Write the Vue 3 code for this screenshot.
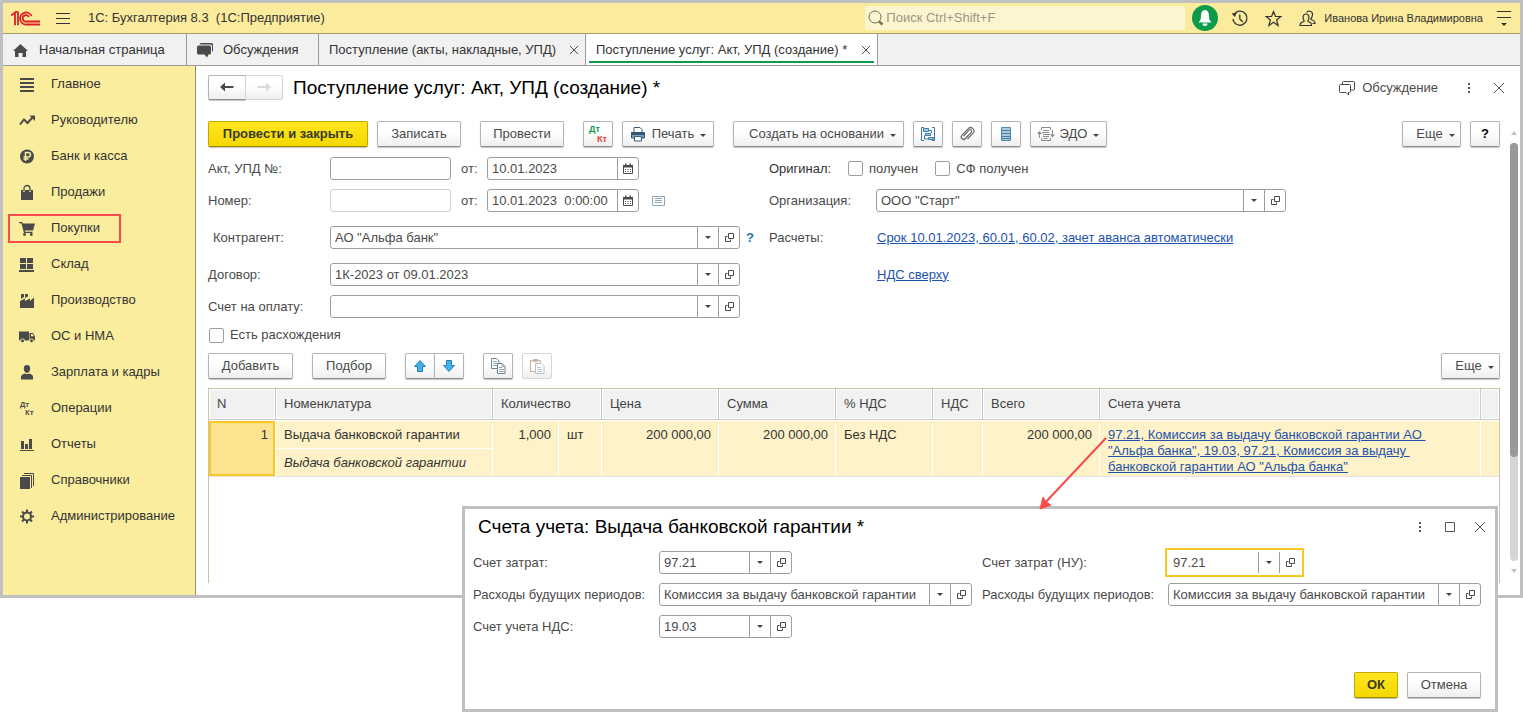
<script setup>
import { ref } from 'vue'

const icons = {
  lines: '<path d="M1 2h14v2H1zM1 6h14v2H1zM1 10h14v2H1zM1 14h14v2H1z"/>',
  trend: '<path d="M1 12.500 5 7.500l3.500 3.500 5-5.500" fill="none" stroke="currentColor" stroke-width="2"/><path d="M10.500 3.500H16V9z"/>',
  ruble: '<circle cx="8" cy="8.500" r="7"/><path d="M6.500 13V4.500h2.700a2.200 2.200 0 0 1 0 4.500H4.500M4.500 11h5" fill="none" stroke="#fbed9e" stroke-width="1.500"/>',
  bag: '<path d="M2 6h2v2h2V6h4v2h2V6h2v10H2z"/><path d="M5 7.500V4.500a3 3 0 0 1 6 0v3" fill="none" stroke="currentColor" stroke-width="1.300"/>',
  cart: '<path d="M0 2h3.300l.6 1.500H16l-2 7H5.800l.3 1.200H13.500V13H5L2.400 3.300H0z"/><circle cx="5.500" cy="14.500" r="1.400"/><circle cx="12.300" cy="14.500" r="1.400"/>',
  boxes: '<path d="M1 2h6v5H1zM8 2h6v5H8zM1 8h6v5H1zM8 8h6v5H8zM0 14h15v2H0z"/>',
  factory: '<path d="M1 16V9l5-2.500V9l5-2.500V9l4-3.500V16zM2 2h3v3L2 7zM6 2h3v2.500L6 6z"/>',
  truck: '<path d="M0 3.500h10v9H0z"/><path d="M10.500 5H14l2 3.500v4h-5.500z"/><path d="M12 6h1.700l1.200 2.300H12z" fill="#fbed9e"/><circle cx="3.500" cy="12.800" r="2.300" fill="#fbed9e"/><circle cx="12.500" cy="12.800" r="2.300" fill="#fbed9e"/><circle cx="3.500" cy="12.800" r="1.500"/><circle cx="12.500" cy="12.800" r="1.500"/>',
  person: '<path d="M8 1a3.200 3.600 0 0 1 3.200 3.800C11.200 7 9.800 9 8 9S4.800 7 4.800 4.800A3.200 3.600 0 0 1 8 1zM2 15.500v-3c0-1.500 2-2.500 4-3 1 .8 3 .8 4 0 2 .5 4 1.500 4 3v3z"/>',
  dtkt: '<text x="1" y="7" font-family="Open Sans" font-weight="700" font-size="7">Дт</text><text x="6" y="15" font-family="Open Sans" font-weight="700" font-size="7">Кт</text>',
  chart: '<path d="M2 5h3v8H2zM6 8h3v5H6zM10 3h3v10h-3zM1 14h14v1H1z"/>',
  books: '<path d="M1 5h10v12H1z"/><path d="M3 3.500h9.500V16M5 1.500h9.500V14" fill="none" stroke="currentColor"/>',
  gear: '<circle cx="8" cy="8.500" r="4" fill="none" stroke="currentColor" stroke-width="2"/><path d="M8 1.500v3M8 12.500v3M1 8.500h3M12 8.500h3M3 3.500l2.200 2.200M10.800 11.300 13 13.500M3 13.500l2.200-2.200M10.800 5.700 13 3.500" fill="none" stroke="currentColor" stroke-width="2"/>',
  home: '<path d="M7.500 2 15 9h-2v6H9.500v-4h-4v4H2V9H0z"/>',
  chats: '<path d="M4 1h10.500a1.500 1.500 0 0 1 1.500 1.500V8.500a1.500 1.500 0 0 1-1 1.400V4A1.500 1.500 0 0 0 13.500 2.500H2.700A1.500 1.500 0 0 1 4 1z"/><path d="M1.500 3.500h11A1.500 1.500 0 0 1 14 5v6a1.500 1.500 0 0 1-1.500 1.500h-1L10 15.500l-2.500-3h-6A1.500 1.500 0 0 1 0 11V5a1.500 1.500 0 0 1 1.500-1.500z"/>',
  chatsLine: '<path d="M1.500 4.500h9a1 1 0 0 1 1 1v6a1 1 0 0 1-1 1h-1V15L7 12.500H1.500a1 1 0 0 1-1-1v-6a1 1 0 0 1 1-1zM3.500 4V2.500a1 1 0 0 1 1-1h10a1 1 0 0 1 1 1v6.500a1 1 0 0 1-1 1H12" fill="none" stroke="currentColor"/>',
  open: '<path d="M7.500 3.500h5v5h-5zM6.500 6.500h-2v5h5v-2" fill="none" stroke="currentColor"/>',
  calendar: '<path d="M3.500 5.500h9v7h-9z" fill="none" stroke="currentColor"/><path d="M3 4h10v2.500H3zM5 2.500h1.500v2H5zM9.500 2.500H11v2H9.500z"/><path d="M5 8h1v1H5zM7.500 8h1v1h-1zM10 8h1v1h-1zM5 10h1v1H5zM7.500 10h1v1h-1zM10 10h1v1h-1z"/>',
  print: '<path d="M4 1.500h6l2 2V7H4z" fill="#fff" stroke="#3a5f7d"/><path d="M1.500 6.500h13v5.500h-13z" fill="#7ba3bf" stroke="#33546e"/><path d="M1.500 6.500h13V9h-13z" fill="#33546e"/><path d="M4.500 10.500h7v4.500h-7z" fill="#fff" stroke="#3a5f7d"/>',
  tree: '<path d="M4 1.500H1.500v13H4M12 1.500h2.500v13H12" fill="none" stroke="#3c7ca8"/><path d="M3.500 2.500h5v3h-5zM5.500 7.500h5v2h-5zM8.500 11.500h5v2h-5z" fill="#a9cbe0" stroke="#3c7ca8"/><path d="M9 4.500h2.500V7M5 9.500H4.500v3.500H8" fill="none" stroke="#3c7ca8"/>',
  clip: '<path d="M4.500 10 10 4.200a1.500 1.500 0 0 1 2.200 2.100L6.500 12.500a2.400 2.400 0 0 1-3.700-3.200L9.300 2.700a3.200 3.200 0 0 1 4.700 4.500L8.500 13" fill="none" stroke="#6a6a6a" stroke-width="1.200"/>',
  list: '<path d="M3.500 1.500h9v13h-9z" fill="#a9cbe0" stroke="#5487a8"/><path d="M3 4.500h10M3 7.500h10M3 10.500h10M3 12.500h10" stroke="#4a7c9e"/>',
  edo: '<path d="M3.500 4V1.500h9V4M3.500 12v2.500h9V12M5 4.500h6M4 6.500h7M5 8.500h7M5 10.500h6M5.500 12.500h4" fill="none" stroke="#8a8a8a"/><path d="M1.500 12V7M14.500 4v5" fill="none" stroke="#8a8a8a"/><path d="M-1 8 1.500 5 4 8zM12 8.500h5L14.500 11.500z" fill="#8a8a8a"/>',
  up: '<path d="M8 2.500 13.500 8.500H10.500V13.500h-5V8.500h-3z" fill="#41b1ec" stroke="#2a7fb5"/>',
  down: '<path d="M8 13.500 13.500 7.500H10.500V2.500h-5v5h-3z" fill="#41b1ec" stroke="#2a7fb5"/>',
  copy: '<path d="M1.500 .5h5l2.500 2.500v7.500H1.500z" fill="#fff" stroke="#72808e"/><path d="M3 3.500h4M3 5.500h4M3 7.500h4" stroke="#8fa5b8"/><path d="M7.500 5.500h4.500l3 3v7H7.500z" fill="#fff" stroke="#72808e"/><path d="M12 5.500v3h3M9 9.500h3M9 11.500h5M9 13.500h5" fill="none" stroke="#8fa5b8"/>',
  paste: '<path d="M1.500 2.500h10v11h-10z" fill="#fff" stroke="#dba884"/><path d="M4 1h5v3H4z" fill="#b9b9b9"/><path d="M6.500 5.500H12l3 3v7H6.500z" fill="#fff" stroke="#b7c0c8"/><path d="M8 9.500h4M8 11.500h5M8 13.500h5" stroke="#bcc9d4"/>',
  history: '<path d="M3.200 4.200A7 7 0 1 1 2 9" fill="none" stroke="currentColor" stroke-width="1.300"/><path d="M8.800 4.500V9l3 3" fill="none" stroke="currentColor" stroke-width="1.300"/><path d="M.5 3.500 5.500 3 4 7z"/>',
  star: '<path d="M8.500 1.500l2 5h5.300l-4.200 3.500 1.500 5.500-4.600-3.200-4.600 3.200 1.500-5.500L1.200 6.500h5.300z" fill="none" stroke="currentColor" stroke-width="1.200"/>',
  users: '<path d="M1 15.500c0-2.500 1-3 4-4V10.500C3.500 8.500 3.500 4 7 4s3.500 4.500 2 6.500v1c3 1 3.500 1.500 3.500 4zM7.500 2.500C9 .5 13.500.5 13.500 4.500c0 2-.8 3-1.500 4v1c3 .8 4 1.500 4 4h-2.500" fill="none" stroke="currentColor" stroke-width="1.200"/>',
  cross: '<path d="M4 4l8 8M12 4l-8 8" fill="none" stroke="currentColor"/>',
  crossBig: '<path d="M3 3l10 10M13 3 3 13" fill="none" stroke="currentColor"/>',
  square: '<path d="M3.500 3.500h9v9h-9z" fill="none" stroke="currentColor"/>',
  dots: '<path d="M7 3h2v2H7zM7 7h2v2H7zM7 11h2v2H7z"/>',
  card: '<path d="M.5 3.500h12v9H.5z" fill="none" stroke="#8fa5b8"/><path d="M3 5.500h7M3 7.500h7M3 9.500h7" stroke="#8fa5b8"/>',
  back: '<path d="M1 8l5-4.500V7h8.500v2H6v3.500z"/>',
  forward: '<path d="M15 8l-5-4.500V7H1.500v2H10v3.500z"/>'
}

const sections = [
  ['lines', 'Главное'],
  ['trend', 'Руководителю'],
  ['ruble', 'Банк и касса'],
  ['bag', 'Продажи'],
  ['cart', 'Покупки'],
  ['boxes', 'Склад'],
  ['factory', 'Производство'],
  ['truck', 'ОС и НМА'],
  ['person', 'Зарплата и кадры'],
  ['dtkt', 'Операции'],
  ['chart', 'Отчеты'],
  ['books', 'Справочники'],
  ['gear', 'Администрирование']
]

const form = ref({
  act: '',
  actDate: '10.01.2023',
  number: '',
  date: '10.01.2023  0:00:00',
  organization: 'ООО "Старт"',
  contractor: 'АО "Альфа банк"',
  contract: '1К-2023 от 09.01.2023',
  invoice: '',
  original: false,
  invoiceReceived: false,
  mismatch: false
})

const accounts = ref([
  { id: 'cost', label: 'Счет затрат:', value: '97.21', size: 'short' },
  { id: 'cost-tax', label: 'Счет затрат (НУ):', value: '97.21', size: 'short', active: true },
  { id: 'future', label: 'Расходы будущих периодов:', value: 'Комиссия за выдачу банковской гарантии' },
  { id: 'future-tax', label: 'Расходы будущих периодов:', value: 'Комиссия за выдачу банковской гарантии' },
  { id: 'vat', label: 'Счет учета НДС:', value: '19.03', size: 'short' }
])
</script>

<template>
  <div class="desktop">
    <div class="window">
      <header class="topbar">
        <svg class="logo" viewBox="0 0 30 15" aria-label="1С">
          <g fill="none" stroke="#dd1f26" stroke-width="1.800">
            <path d="M0 4.500 4 1.500v12.700M7 .500v13.700M4 1.500 7 .5" />
            <path d="M20.500 5A6 6 0 1 0 15.500 13.500H29M17.800 6A3.200 3.200 0 1 0 15.500 10.500H29" />
          </g>
        </svg>
        <button class="plain menu" aria-label="Меню"><i></i><i></i><i></i></button>
        <span class="app-name">1С: Бухгалтерия 8.3&nbsp; (1С:Предприятие)</span>
        <label class="search">
          <svg viewBox="0 0 16 16"><circle cx="7" cy="7" r="6" fill="none" stroke="#777058" /><path d="M11 11.500l3.500 3" stroke="#777058" stroke-width="2.500" /></svg>
          <input type="text" placeholder="Поиск Ctrl+Shift+F" aria-label="Поиск">
        </label>
        <button class="plain bell" aria-label="Уведомления">
          <svg viewBox="0 0 26 26"><path d="M13 5c3.500.5 4 3.500 4 6.500 0 3 1 4.500 2.500 6h-13C8 16 9 14.500 9 11.500c0-3 .5-6 4-6.500z" fill="#fff" /><path d="M10.500 18.500h5a2.500 2.500 0 0 1-5 0z" fill="#fff" /></svg>
        </button>
        <button class="plain tool" aria-label="История"><svg class="ic" viewBox="0 0 17 17" v-html="icons.history"></svg></button>
        <button class="plain tool" aria-label="Избранное"><svg class="ic" viewBox="0 0 17 17" v-html="icons.star"></svg></button>
        <button class="plain tool" aria-label="Пользователи"><svg class="ic" viewBox="0 0 17 17" v-html="icons.users"></svg></button>
        <span class="user">Иванова Ирина Владимировна</span>
        <button class="plain service" aria-label="Сервис"><i></i><i></i><b></b></button>
      </header>

      <nav class="tabs">
        <a href="#" class="tab tab-home"><svg class="ic" viewBox="0 0 16 16" v-html="icons.home"></svg>Начальная страница</a>
        <a href="#" class="tab tab-chat"><svg class="ic" viewBox="0 0 16 16" v-html="icons.chats"></svg>Обсуждения</a>
        <div class="tab tab-doc"><a href="#">Поступление (акты, накладные, УПД)</a><button class="plain close" aria-label="Закрыть"><svg class="ic" viewBox="2 2 12 12" v-html="icons.cross"></svg></button></div>
        <div class="tab tab-current"><a href="#">Поступление услуг: Акт, УПД (создание) *</a><button class="plain close" aria-label="Закрыть"><svg class="ic" viewBox="2 2 12 12" v-html="icons.cross"></svg></button></div>
      </nav>

      <div class="body">
        <nav class="sections">
          <a v-for="[icon, title] in sections" :key="icon" href="#" :class="{ marked: icon === 'cart' }">
            <svg class="ic" viewBox="0 0 16 17" v-html="icons[icon]"></svg>{{ title }}
          </a>
        </nav>

        <main class="page">
          <div class="content">
            <div class="heading">
              <div class="pair nav-pair">
                <button class="btn" aria-label="Назад"><svg class="ic" viewBox="0 0 16 16" v-html="icons.back"></svg></button>
                <button class="btn" aria-label="Вперед" disabled><svg class="ic" viewBox="0 0 16 16" v-html="icons.forward"></svg></button>
              </div>
              <h1>Поступление услуг: Акт, УПД (создание) *</h1>
              <a href="#" class="discuss"><svg class="ic" viewBox="0 0 16 16" v-html="icons.chatsLine"></svg>Обсуждение</a>
              <button class="plain head-btn" aria-label="Действия"><svg class="ic" viewBox="0 0 16 16" v-html="icons.dots"></svg></button>
              <button class="plain head-btn" aria-label="Закрыть"><svg class="ic" viewBox="0 0 16 16" v-html="icons.crossBig"></svg></button>
            </div>

            <div class="bar">
              <button class="btn primary w-post">Провести и закрыть</button>
              <button class="btn w-mid">Записать</button>
              <button class="btn w-mid apart">Провести</button>
              <button class="btn w-icon apart dtkt" aria-label="Дт Кт"><span>Дт</span><span>Кт</span></button>
              <button class="btn w-print"><svg class="ic" viewBox="0 0 16 16" v-html="icons.print"></svg>Печать<i class="caret"></i></button>
              <button class="btn w-create apart">Создать на основании<i class="caret"></i></button>
              <button class="btn w-icon" aria-label="Структура подчиненности"><svg class="ic" viewBox="0 0 16 16" v-html="icons.tree"></svg></button>
              <button class="btn w-icon" aria-label="Файлы"><svg class="ic" viewBox="0 0 16 16" v-html="icons.clip"></svg></button>
              <button class="btn w-icon" aria-label="Реестр"><svg class="ic" viewBox="0 0 16 16" v-html="icons.list"></svg></button>
              <button class="btn w-edo"><svg class="ic" viewBox="0 0 16 16" v-html="icons.edo"></svg>ЭДО<i class="caret"></i></button>
              <button class="btn w-more push">Еще<i class="caret"></i></button>
              <button class="btn w-icon help">?</button>
            </div>

            <div class="row">
              <label for="act">Акт, УПД №:</label>
              <div class="cell">
                <div class="field number"><input id="act" v-model="form.act" type="text"></div>
                <label for="act-date" class="from">от:</label>
                <div class="field date"><input id="act-date" v-model="form.actDate" type="text"><button class="plain" aria-label="Календарь"><svg class="ic" viewBox="0 0 16 16" v-html="icons.calendar"></svg></button></div>
              </div>
              <span class="strong">Оригинал:</span>
              <div class="cell checks">
                <label class="check"><input v-model="form.original" type="checkbox">получен</label>
                <label class="check"><input v-model="form.invoiceReceived" type="checkbox">СФ получен</label>
              </div>
            </div>
            <div class="row">
              <label for="number">Номер:</label>
              <div class="cell">
                <div class="field number pale"><input id="number" v-model="form.number" type="text"></div>
                <label for="date" class="from">от:</label>
                <div class="field date"><input id="date" v-model="form.date" type="text"><button class="plain" aria-label="Календарь"><svg class="ic" viewBox="0 0 16 16" v-html="icons.calendar"></svg></button></div>
                <svg class="ic card" viewBox="0 0 16 16" v-html="icons.card"></svg>
              </div>
              <label for="org">Организация:</label>
              <div class="field combo"><input id="org" v-model="form.organization" type="text"><button class="plain" aria-label="Выбрать"><i class="caret"></i></button><button class="plain" aria-label="Открыть"><svg class="ic" viewBox="0 0 16 16" v-html="icons.open"></svg></button></div>
            </div>
            <div class="row wide-gap">
              <label for="contractor" class="indent">Контрагент:</label>
              <div class="cell">
                <div class="field combo"><input id="contractor" v-model="form.contractor" type="text"><button class="plain" aria-label="Выбрать"><i class="caret"></i></button><button class="plain" aria-label="Открыть"><svg class="ic" viewBox="0 0 16 16" v-html="icons.open"></svg></button></div>
                <a href="#" class="hint">?</a>
              </div>
              <span>Расчеты:</span>
              <a href="#" class="link">Срок 10.01.2023, 60.01, 60.02, зачет аванса автоматически</a>
            </div>
            <div class="row wide-gap">
              <label for="contract">Договор:</label>
              <div class="field combo"><input id="contract" v-model="form.contract" type="text"><button class="plain" aria-label="Выбрать"><i class="caret"></i></button><button class="plain" aria-label="Открыть"><svg class="ic" viewBox="0 0 16 16" v-html="icons.open"></svg></button></div>
              <span></span>
              <a href="#" class="link">НДС сверху</a>
            </div>
            <div class="row">
              <label for="invoice">Счет на оплату:</label>
              <div class="field combo"><input id="invoice" v-model="form.invoice" type="text"><button class="plain" aria-label="Выбрать"><i class="caret"></i></button><button class="plain" aria-label="Открыть"><svg class="ic" viewBox="0 0 16 16" v-html="icons.open"></svg></button></div>
            </div>
            <label class="check mismatch"><input v-model="form.mismatch" type="checkbox">Есть расхождения</label>

            <div class="bar list-bar">
              <button class="btn w-add">Добавить</button>
              <button class="btn w-pick apart">Подбор</button>
              <div class="pair apart">
                <button class="btn" aria-label="Вверх"><svg class="ic" viewBox="0 0 16 16" v-html="icons.up"></svg></button>
                <button class="btn" aria-label="Вниз"><svg class="ic" viewBox="0 0 16 16" v-html="icons.down"></svg></button>
              </div>
              <button class="btn w-icon apart" aria-label="Копировать"><svg class="ic" viewBox="0 0 16 16" v-html="icons.copy"></svg></button>
              <button class="btn w-icon" aria-label="Вставить" disabled><svg class="ic" viewBox="0 0 16 16" v-html="icons.paste"></svg></button>
              <button class="btn w-more push">Еще<i class="caret"></i></button>
            </div>

            <div class="grid">
              <table>
                <colgroup>
                  <col class="c-n"><col class="c-item"><col class="c-qty"><col class="c-unit"><col class="c-sum"><col class="c-sum">
                  <col class="c-rate"><col class="c-vat"><col class="c-sum"><col><col class="c-end">
                </colgroup>
                <thead>
                  <tr>
                    <th>N</th><th>Номенклатура</th><th colspan="2">Количество</th><th>Цена</th><th>Сумма</th>
                    <th>% НДС</th><th>НДС</th><th>Всего</th><th>Счета учета</th><th></th>
                  </tr>
                </thead>
                <tbody>
                  <tr>
                    <td rowspan="2" class="num current">1</td>
                    <td>Выдача банковской гарантии</td>
                    <td rowspan="2" class="num">1,000</td>
                    <td rowspan="2">шт</td>
                    <td rowspan="2" class="num">200 000,00</td>
                    <td rowspan="2" class="num">200 000,00</td>
                    <td rowspan="2">Без НДС</td>
                    <td rowspan="2"></td>
                    <td rowspan="2" class="num">200 000,00</td>
                    <td rowspan="2"><a href="#" class="link">97.21, Комиссия за выдачу банковской гарантии АО&nbsp;<br>"Альфа банка", 19.03, 97.21, Комиссия за выдачу&nbsp;<br>банковской гарантии АО "Альфа банка"</a></td>
                    <td rowspan="2"></td>
                  </tr>
                  <tr><td class="note">Выдача банковской гарантии</td></tr>
                </tbody>
              </table>
            </div>
          </div>

          <div class="scroll">
            <i class="arrow-up"></i>
            <div class="track"><div class="thumb"></div></div>
            <i class="arrow-down"></i>
          </div>
        </main>
      </div>
    </div>

    <section class="dialog" role="dialog" aria-labelledby="dialog-title">
      <div class="dialog-head">
        <h2 id="dialog-title">Счета учета: Выдача банковской гарантии *</h2>
        <button class="plain head-btn" aria-label="Действия"><svg class="ic" viewBox="0 0 16 16" v-html="icons.dots"></svg></button>
        <button class="plain head-btn" aria-label="Развернуть"><svg class="ic" viewBox="0 0 16 16" v-html="icons.square"></svg></button>
        <button class="plain head-btn" aria-label="Закрыть"><svg class="ic" viewBox="0 0 16 16" v-html="icons.crossBig"></svg></button>
      </div>
      <div class="accounts">
        <div v-for="a in accounts" :key="a.id" class="account">
          <label :for="a.id">{{ a.label }}</label>
          <div class="field" :class="[a.size, { active: a.active }]"><input :id="a.id" v-model="a.value" type="text"><button class="plain" aria-label="Выбрать"><i class="caret"></i></button><button class="plain" aria-label="Открыть"><svg class="ic" viewBox="0 0 16 16" v-html="icons.open"></svg></button></div>
        </div>
      </div>
      <div class="dialog-foot">
        <button class="btn primary w-ok">ОК</button>
        <button class="btn w-pick">Отмена</button>
      </div>
    </section>

    <svg class="pointer" viewBox="0 0 70 76" aria-hidden="true">
      <path d="M68 3 5 70" stroke="#fb4a48" stroke-width="2" fill="none" />
      <path d="M2 74 5 62l3 5 5 3z" fill="#fb4a48" stroke="#fb4a48" />
    </svg>
  </div>
</template>

<style>
body {
  background: #fff;
}
</style>

<style scoped>
.desktop,
.desktop *,
.desktop *::after {
  box-sizing: border-box;
}
.desktop {
  position: relative;
  min-height: 100vh;
  font: 13px/16px "Liberation Sans", Arial, sans-serif;
  color: #4a4a4a;
}
input,
button {
  font: inherit;
  color: inherit;
}
a {
  color: inherit;
  text-decoration: none;
}
.plain {
  display: flex;
  align-items: center;
  justify-content: center;
  padding: 0;
  border: 0;
  background: none;
}
.ic {
  display: block;
  flex: none;
  width: 16px;
  height: 16px;
  fill: currentColor;
  overflow: visible;
}
.caret {
  border: 3px solid transparent;
  border-top-color: #444;
  border-bottom: 0;
}
.btn .caret {
  margin-top: 4px;
}

.window {
  border: 3px solid #c0c0c0;
  background: #fff;
}
.topbar {
  display: flex;
  align-items: center;
  height: 31px;
  padding: 0 9px 0 8px;
  background: #fbeb9c;
  border-bottom: 1px solid #a39c72;
  color: #333;
}
.logo {
  width: 30px;
  height: 15px;
}
.menu {
  flex-direction: column;
  gap: 4px;
  width: 14px;
  margin-left: 15px;
}
.menu i,
.service i {
  width: 14px;
  height: 1px;
  background: #333;
}
.app-name {
  margin: 0 auto 0 18px;
  white-space: pre;
}
.search {
  display: flex;
  align-items: center;
  width: 320px;
  height: 24px;
  padding-left: 3px;
  border-radius: 2px;
  background: #fdf5cf;
}
.search svg {
  width: 16px;
  height: 16px;
}
.search input {
  flex: 1;
  min-width: 0;
  padding: 0 2px;
  border: 0;
  background: none;
}
.search input::placeholder {
  color: #9a9687;
  opacity: 1;
}
.bell {
  width: 26px;
  height: 26px;
  margin: 0 13px 0 7px;
  border-radius: 50%;
  background: #0b9b4b;
}
.bell svg {
  width: 26px;
  height: 26px;
}
.tool {
  margin-right: 17px;
}
.tool .ic {
  width: 17px;
  height: 17px;
}
.tool + .user {
  margin-left: -9px;
}
.user {
  font-size: 11px;
  margin-right: 14px;
}
.service {
  flex-direction: column;
  gap: 5px;
  width: 14px;
}
.service b {
  border: 3px solid transparent;
  border-top-color: #333;
  border-bottom: 0;
}

.tabs {
  display: flex;
  height: 32px;
  background: #f1f1f1;
  border-bottom: 1px solid #9b9b9b;
  color: #333;
}
.tab {
  display: flex;
  align-items: center;
  border-right: 1px solid #9b9b9b;
  white-space: nowrap;
}
.tab-home {
  width: 184px;
  padding-left: 10px;
  gap: 10px;
}
.tab-chat {
  width: 132px;
  padding-left: 10px;
  gap: 10px;
}
.tab .ic,
.sections .ic {
  color: #4a4a4a;
}
.tab-doc,
.tab-current {
  justify-content: space-between;
  padding: 0 5px 0 10px;
}
.tab-doc {
  width: 267px;
}
.tab-current {
  position: relative;
  width: 292px;
  background: #fff;
}
.tab-current::after {
  content: "";
  position: absolute;
  left: 3px;
  right: 3px;
  bottom: 2px;
  height: 2px;
  background: #0b9b4b;
}
.close .ic {
  width: 12px;
  height: 12px;
}

.body {
  display: flex;
}
.sections {
  flex: none;
  width: 193px;
  padding-bottom: 61px;
  background: #fbed9e;
  border-right: 1px solid #948d5c;
  color: #333;
}
.sections a {
  position: relative;
  display: flex;
  align-items: center;
  gap: 16px;
  height: 36px;
  padding-left: 16px;
}
.sections .ic {
  height: 17px;
}
.marked::after {
  content: "";
  position: absolute;
  top: 4px;
  left: 5px;
  width: 113px;
  height: 29px;
  border: 2px solid #fb4a48;
}

.page {
  display: flex;
  flex: 1;
  min-width: 0;
}
.content {
  display: flex;
  flex-direction: column;
  flex: 1;
  min-width: 0;
  padding: 9px 9px 12px 12px;
}
.heading {
  display: flex;
  align-items: center;
  height: 25px;
  margin-bottom: 21px;
}
h1,
h2 {
  margin: 0;
  font-size: 19px;
  line-height: 24px;
  font-weight: 400;
  color: #000;
}
h1 {
  margin: 0 auto 0 10px;
}
.discuss {
  display: flex;
  gap: 7px;
  margin-right: 16px;
}
.head-btn {
  width: 30px;
  height: 24px;
  color: #555;
}
.heading .head-btn:last-child {
  margin-right: -14px;
}

.bar {
  display: flex;
  gap: 9px;
  margin-bottom: 10px;
}
.btn {
  display: flex;
  align-items: center;
  justify-content: center;
  gap: 6px;
  height: 26px;
  padding: 0 0 1px;
  border: 1px solid #b3b3b3;
  border-bottom-color: #8f8f8f;
  border-radius: 2px;
  background: linear-gradient(#fff 40%, #efefef);
  box-shadow: 0 1px 1px #c4c4c4;
  white-space: nowrap;
}
.btn:disabled {
  border-color: #d6d6d6;
  box-shadow: none;
  color: #d9d9d9;
}
.primary {
  border-color: #c2a900;
  border-bottom-color: #9c8800;
  background: linear-gradient(#ffe61f, #f5d800);
  color: #3a3a28;
  font-weight: 700;
}
.pair {
  display: flex;
}
.pair .btn {
  width: 30px;
  border-radius: 2px 0 0 2px;
}
.pair .btn + .btn {
  margin-left: -1px;
  border-radius: 0 2px 2px 0;
}
.nav-pair .btn {
  width: 38px;
  height: 25px;
}
.apart {
  margin-left: 10px;
}
.push {
  margin-left: auto;
}
.w-post {
  width: 160px;
}
.w-mid {
  width: 84px;
}
.w-add {
  width: 85px;
}
.w-pick {
  width: 74px;
}
.w-ok {
  width: 44px;
}
.w-icon {
  width: 30px;
}
.w-print {
  width: 92px;
}
.w-create {
  width: 171px;
}
.w-edo {
  width: 77px;
}
.w-more {
  width: 59px;
}
.w-more,
.w-create {
  padding-left: 8px;
}
.help {
  color: #000;
  font-weight: 700;
}
.dtkt {
  flex-direction: column;
  gap: 0;
  padding: 0 5px;
  font-size: 9px;
  line-height: 10px;
  font-weight: 700;
  color: #0b9b4b;
}
.dtkt span {
  align-self: flex-start;
}
.dtkt span + span {
  align-self: flex-end;
  color: #e2443f;
}

.row {
  display: grid;
  grid-template-columns: 122px 439px 107px 1fr;
  align-items: center;
  height: 23px;
  margin-bottom: 9px;
}
.wide-gap {
  margin-top: 5px;
}
.indent {
  padding-left: 5px;
}
.strong {
  color: #333;
}
.cell {
  display: flex;
  align-items: center;
}
.field {
  display: flex;
  height: 23px;
  border: 1px solid #9e9e9e;
  border-radius: 3px;
  background: #fff;
}
.field input {
  flex: 1;
  min-width: 0;
  padding: 0 4px;
  border: 0;
  background: none;
  outline: 0;
}
.field .plain {
  flex: none;
  width: 21px;
  border-left: 1px solid #9e9e9e;
}
.number {
  width: 121px;
}
.pale {
  border-color: #cfcfcf;
}
.from {
  width: 36px;
  padding-left: 10px;
}
.date {
  width: 152px;
}
.combo {
  width: 410px;
}
.card {
  margin-left: 13px;
}
.hint {
  margin-left: 6px;
  color: #1976b8;
  font-weight: 700;
}
.link {
  color: #1d52ad;
  text-decoration: underline;
}
.row .link {
  padding-left: 1px;
}
.check {
  display: flex;
  align-items: center;
  gap: 6px;
}
.check input {
  appearance: none;
  width: 15px;
  height: 15px;
  margin: 0;
  border: 1px solid #9e9e9e;
  border-radius: 2px;
  background: #fff;
}
.checks {
  gap: 17px;
  margin-left: -28px;
}
.mismatch {
  height: 16px;
  padding-left: 1px;
  margin-bottom: 10px;
}
.list-bar {
  margin-bottom: 9px;
}

.grid {
  flex: 1;
  border: 1px solid #c9c4a6;
  border-bottom: 0;
}
table {
  width: 100%;
  table-layout: fixed;
  border-collapse: separate;
  border-spacing: 0;
  border-bottom: 1px solid #e4e4e4;
  color: #333;
}
.c-n { width: 67px; }
.c-item { width: 217px; }
.c-qty { width: 66px; }
.c-unit { width: 43px; }
.c-sum { width: 117px; }
.c-rate { width: 97px; }
.c-vat { width: 50px; }
.c-end { width: 18px; }
th {
  height: 31px;
  padding: 0 8px;
  border-right: 1px solid #c9c9c9;
  border-bottom: 1px solid #c9c9c9;
  background: #f1f1f1;
  box-shadow: inset 0 0 0 1px #fff;
  color: #444;
  font-weight: 400;
  text-align: left;
  white-space: nowrap;
}
th:last-child {
  border-right: 0;
}
td {
  height: 28px;
  padding: 6px 8px 1px;
  border-right: 1px solid #fff;
  border-top: 1px solid #fff;
  background: #fdf2c8;
  vertical-align: top;
  white-space: nowrap;
}
td:last-child {
  border-right: 0;
}
td.note {
  border-right: 1px solid #fff;
  font-style: italic;
}
td.num {
  padding-right: 7px;
  text-align: right;
}
td.current {
  background: #fbe38f;
  box-shadow: inset 0 0 0 2px #f9c922;
}

.scroll {
  display: flex;
  flex-direction: column;
  align-items: center;
  gap: 8px;
  width: 8px;
  margin: 65px 2px 22px 1px;
}
.arrow-up,
.arrow-down {
  border: 3px solid transparent;
}
.arrow-up {
  border-top: 0;
  border-bottom: 4px solid #c0c0c0;
}
.arrow-down {
  border-bottom: 0;
  border-top: 4px solid #c0c0c0;
}
.track {
  flex: 1;
  width: 8px;
  border-radius: 4px;
  background: #d6d6d6;
}
.thumb {
  height: 75%;
  border-radius: 4px;
  background: #999;
}

.dialog {
  position: absolute;
  top: 506px;
  left: 462px;
  right: 25px;
  padding: 6px 14px 11px 8px;
  border: 3px solid #c0c0c0;
  background: #fff;
}
.dialog-head {
  display: flex;
  align-items: center;
  margin: 0 -14px 12px 5px;
}
.dialog-head h2 {
  margin-right: auto;
}
.accounts {
  display: grid;
  grid-template-columns: 1fr 1fr;
  gap: 9px 10px;
}
.account {
  display: grid;
  grid-template-columns: 186px 1fr;
  align-items: center;
  white-space: nowrap;
}
.short {
  width: 133px;
}
.active {
  border-color: #fff;
  border-radius: 0;
  outline: 2px solid #f9c922;
  outline-offset: 1px;
}
.dialog-foot {
  display: flex;
  justify-content: flex-end;
  gap: 9px;
  margin-top: 34px;
}
.pointer {
  position: absolute;
  top: 435px;
  left: 1038px;
  width: 70px;
  height: 76px;
  pointer-events: none;
}
</style>
